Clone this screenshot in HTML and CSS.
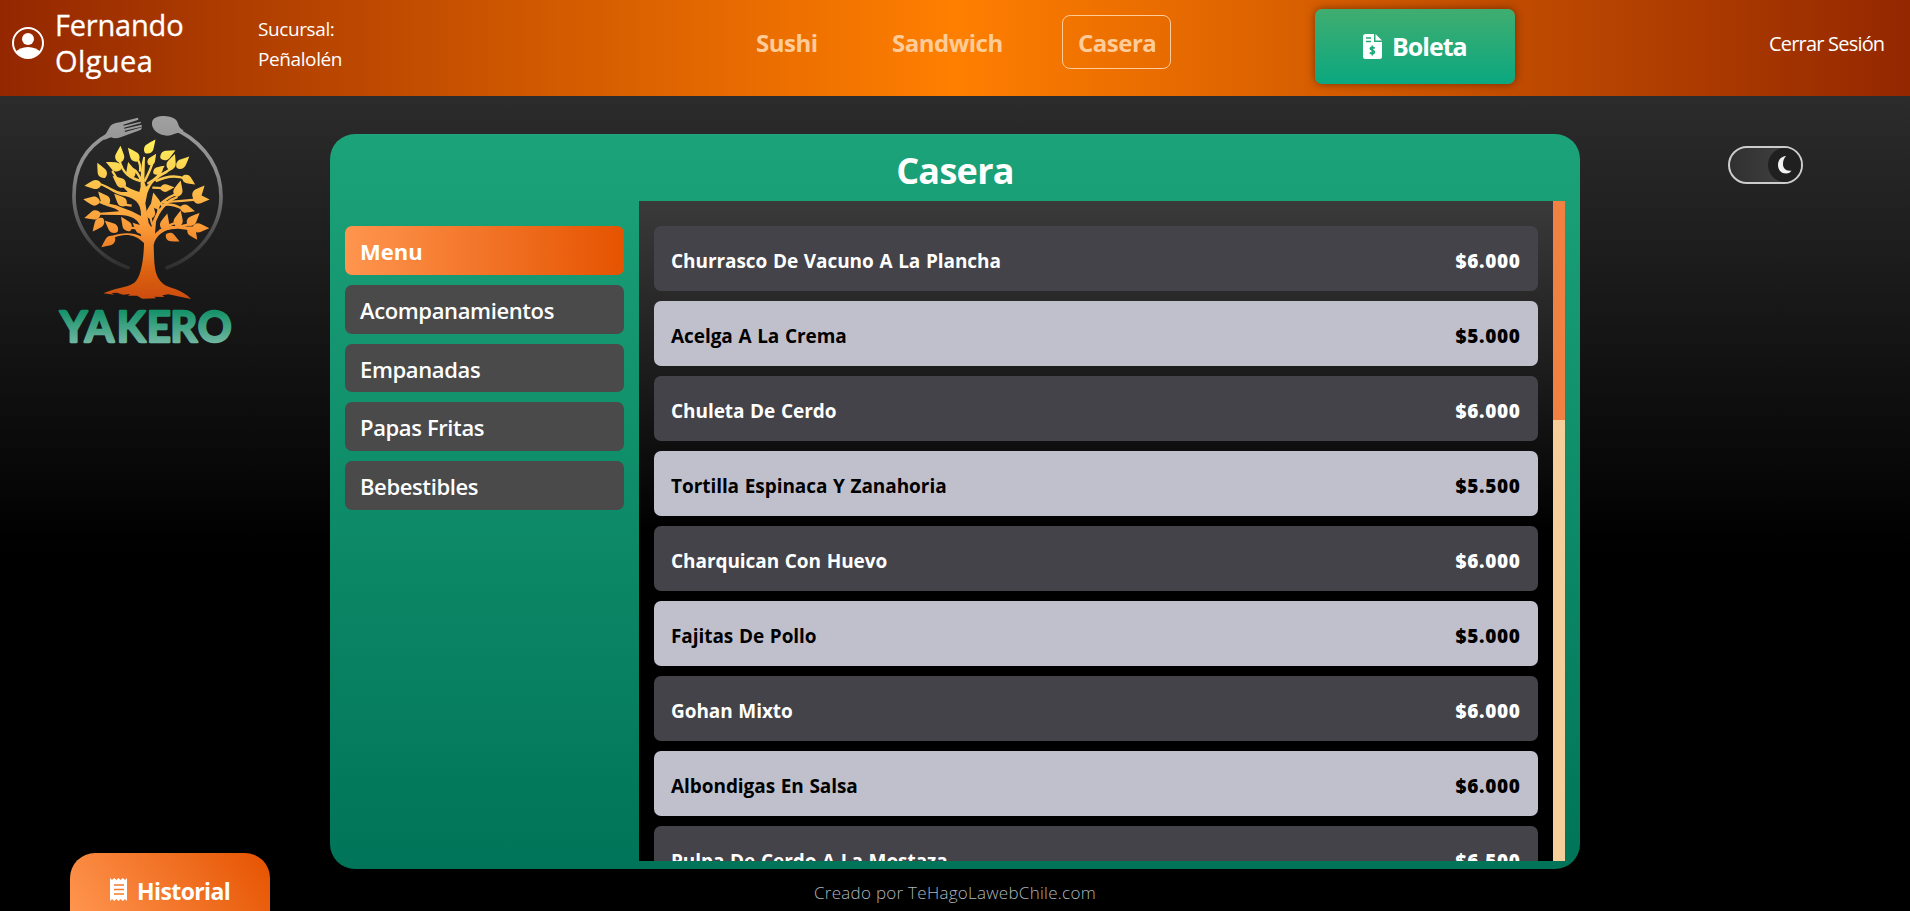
FILE: index.html
```html
<!DOCTYPE html>
<html lang="es">
<head>
<meta charset="utf-8">
<title>Yakero</title>
<link rel="stylesheet" href="styles.css">
</head>
<body>
<header class="topbar">
  <div class="user">
    <svg class="user-icon" viewBox="0 0 32 32"><defs><clipPath id="face"><circle cx="16" cy="16" r="15"/></clipPath></defs><circle cx="16" cy="16" r="15" fill="none" stroke="#fff" stroke-width="2"/><circle cx="16" cy="12" r="6" fill="#fff"/><path clip-path="url(#face)" fill="#fff" d="M2 26Q8 20 16 20T30 26V32H2Z"/></svg>
    <div class="user-name">Fernando<br><span class="surname">Olguea</span></div>
  </div>
  <div class="branch">Sucursal:<br>Peñalolén</div>
  <nav class="nav"><a class="n1">Sushi</a><a class="n2">Sandwich</a><a class="n3">Casera</a></nav>
  <button class="boleta">
    <svg viewBox="0 0 19 25" width="19" height="25"><path fill="#fff" d="M2.500 0H11V8H19V22.500Q19 25 16.500 25H2.500Q0 25 0 22.500V2.500Q0 0 2.500 0ZM12.500 0L19 6.500H12.500Z"/><path d="M3 4H8M3 7.500H8" stroke="#27a975" stroke-width="1.500"/><path d="M11.700 14.300Q9 12.600 7.500 13.900C6 16 12 16 11.400 18.500Q10 20.600 6.700 18.800M9.300 11.500V21.500" fill="none" stroke="#1ea87a" stroke-width="1.600"/></svg>
    <span>Boleta</span>
  </button>
  <a class="logout">Cerrar Sesión</a>
</header>
<div class="page">
  <aside class="left">
    <svg class="logo" viewBox="0 0 660 780" width="220" height="260">
      <defs>
        <linearGradient id="ring" gradientUnits="userSpaceOnUse" x1="0" y1="50" x2="0" y2="510"><stop offset="0" stop-color="#a0a0a0"/><stop offset=".35" stop-color="#8b8b8b"/><stop offset=".75" stop-color="#505050"/><stop offset="1" stop-color="#2c2c2c"/></linearGradient>
        <linearGradient id="tree" gradientUnits="userSpaceOnUse" x1="0" y1="120" x2="0" y2="590"><stop offset="0" stop-color="#fff35c"/><stop offset=".3" stop-color="#fcc04b"/><stop offset=".55" stop-color="#fb9a38"/><stop offset=".85" stop-color="#db600f"/><stop offset="1" stop-color="#ce4e10"/></linearGradient>
        <linearGradient id="word" gradientUnits="userSpaceOnUse" x1="0" y1="635" x2="0" y2="735"><stop offset="0" stop-color="#17936b"/><stop offset="1" stop-color="#75b8a4"/></linearGradient>
        <path id="leaf" d="M0 2C-10-1-17-12-12-23Q-6-37 0-49Q6-37 12-23C17-12 10-1 0 2Z"/>
        <mask id="leaves" maskUnits="userSpaceOnUse" x="0" y="0" width="660" height="780">
          <g fill="#fff">
            <use href="#leaf" transform="translate(317 158) rotate(37)"/><use href="#leaf" transform="translate(294 182) rotate(-38)"/><use href="#leaf" transform="translate(238 186) rotate(4)"/><use href="#leaf" transform="translate(363 174) rotate(62)"/><use href="#leaf" transform="translate(327 194) rotate(33) scale(.8)"/><use href="#leaf" transform="translate(388 208) rotate(20)"/><use href="#leaf" transform="translate(412 203) rotate(47)"/><use href="#leaf" transform="translate(342 220) rotate(55) scale(.8)"/><use href="#leaf" transform="translate(277 233) rotate(-15)"/><use href="#leaf" transform="translate(242 207) rotate(-65)"/><use href="#leaf" transform="translate(194 232) rotate(-27)"/><use href="#leaf" transform="translate(255 259) rotate(-50)"/><use href="#leaf" transform="translate(182 252) rotate(-96)"/><use href="#leaf" transform="translate(429 229) rotate(124) scale(.9)"/><use href="#leaf" transform="translate(362 265) rotate(86) scale(.85)"/><use href="#leaf" transform="translate(410 289) rotate(14)"/><use href="#leaf" transform="translate(461 293) rotate(42)"/><use href="#leaf" transform="translate(460 297) rotate(92)"/><use href="#leaf" transform="translate(422 322) rotate(105) scale(.9)"/><use href="#leaf" transform="translate(351 325) rotate(-13)"/><use href="#leaf" transform="translate(330 355) rotate(7)"/><use href="#leaf" transform="translate(257 316) rotate(-45)"/><use href="#leaf" transform="translate(206 312) rotate(-40)"/><use href="#leaf" transform="translate(178 306) rotate(-80)"/><use href="#leaf" transform="translate(180 340) rotate(-107)"/><use href="#leaf" transform="translate(188 356) rotate(-142)"/><use href="#leaf" transform="translate(231 395) rotate(-48)"/><use href="#leaf" transform="translate(270 391) rotate(-33)"/><use href="#leaf" transform="translate(223 412) rotate(-127)"/><use href="#leaf" transform="translate(310 398) rotate(-47) scale(.9)"/><use href="#leaf" transform="translate(370 388) rotate(14)"/><use href="#leaf" transform="translate(411 379) rotate(13)"/><use href="#leaf" transform="translate(444 374) rotate(45)"/><use href="#leaf" transform="translate(459 383) rotate(92)"/><use href="#leaf" transform="translate(447 383) rotate(146) scale(.9)"/><use href="#leaf" transform="translate(379 405) rotate(116) scale(.9)"/>
          </g>
        </mask>
      </defs>
      <g fill="none" stroke="url(#ring)" stroke-width="11" stroke-linecap="round"><path d="M205 104C130 145 101 215 102 292C103 385 168 470 264 503"/><path d="M420 94C500 138 544 210 543 292C542 385 475 470 381 503"/></g>
      <path fill="url(#ring)" d="M189 116L211 78Q220 69 240 67L294 53L295 59L250 74L251 77L302 65L303 69L252 83L253 86L305 74L305 80L254 92L255 96L306 82L303 89L242 112Q225 118 213 112L194 119ZM338 61C348 44 388 45 405 57C417 66 412 82 430 91L425 102C410 93 402 107 382 107C350 106 329 82 338 61Z"/>
      <path fill="url(#tree)" d="M302 260C302 200 307 183 310 170L315 171L313 245L318 260C350 235 350 224 380 212L383 218C342 235 333 252 322 280L316 310L326 369L334 382C340 350 355 322 390 297L411 288L414 294C376 309 359 338 348 365L345 401C360 384 380 376 411 378L410 385C375 385 345 409 341 435C343 493 341 528 370 552C385 564 428 568 453 597L385 583L367 586L373 591L342 590L349 595L307 596L291 587H264L270 582L249 584L231 578L214 579L223 584L190 580C222 564 260 564 283 548C306 531 312 460 312 429C285 400 250 399 215 415L211 409C252 394 285 398 307 411C304 365 288 348 240 345L179 344L180 338L238 334C220 320 202 321 178 309L181 303C208 315 224 311 243 322L275 334L303 348C304 310 286 292 243 286C218 279 205 263 178 255L180 249C210 258 217 270 245 276L263 276C252 262 235 250 214 215L219 210C240 245 249 261 298 276Z"/>
      <path fill="none" stroke="url(#tree)" stroke-width="7" d="M303 245C300 225 285 208 276 207M300 215Q303 195 294 180M239 183Q245 207 260 222Q280 238 301 243M313 245Q330 213 337 190M322 251Q359 231 366 207M328 250Q360 225 396 205M337 263Q365 265 372 264M347 244Q396 219 438 237M352 319Q393 283 412 283M370 307Q430 302 472 299M363 317Q390 307 427 326M342 382Q328 356 334 346M348 355Q361 328 351 315M359 392Q405 378 472 384M385 385Q432 377 459 370M375 381Q408 370 416 361M410 382Q449 386 454 391M275 317Q247 315 251 306M290 386Q275 380 267 388M307 411Q304 392 303 385"/>
      <rect width="660" height="780" fill="url(#tree)" mask="url(#leaves)"/>
      <text class="logo-word" x="60 134 230 320 391 473" y="726">YAKERO</text>
    </svg>
    <button class="historial"><svg viewBox="0 0 17 23" width="17" height="23"><path fill="#fff" d="M0 0L2 2 4.250 0 6.400 2 8.500 0 10.600 2 12.750 0 15 2 17 0V23L15 21 12.750 23 10.600 21 8.500 23 6.400 21 4.250 23 2 21 0 23Z"/><path d="M4 7H14M4 11.500H14M4 16H14" stroke="#f37a2c" stroke-width="1.300"/></svg><span>Historial</span></button>
  </aside>
  <main class="center">
    <section class="panel">
      <h1>Casera</h1>
      <div class="cols">
        <div class="cats">
          <div class="cat active"><span>Menu</span></div><div class="cat"><span>Acompanamientos</span></div><div class="cat"><span>Empanadas</span></div><div class="cat"><span>Papas Fritas</span></div><div class="cat"><span>Bebestibles</span></div>
        </div>
        <div class="scroll">
          <div class="items">
            <div class="item"><span>Churrasco De Vacuno A La Plancha</span><b>$6.000</b></div>
            <div class="item light"><span>Acelga A La Crema</span><b>$5.000</b></div>
            <div class="item"><span>Chuleta De Cerdo</span><b>$6.000</b></div>
            <div class="item light"><span>Tortilla Espinaca Y Zanahoria</span><b>$5.500</b></div>
            <div class="item"><span>Charquican Con Huevo</span><b>$6.000</b></div>
            <div class="item light"><span>Fajitas De Pollo</span><b>$5.000</b></div>
            <div class="item"><span>Gohan Mixto</span><b>$6.000</b></div>
            <div class="item light"><span>Albondigas En Salsa</span><b>$6.000</b></div>
            <div class="item"><span>Pulpa De Cerdo A La Mostaza</span><b>$6.500</b></div>
          </div>
          <div class="track"><div class="thumb"></div></div>
        </div>
      </div>
    </section>
    <footer>Creado por TeHagoLawebChile.com</footer>
  </main>
  <aside class="right">
    <div class="toggle"><div class="knob"><svg viewBox="0 0 17 18" width="17" height="18"><path fill="#f2f2f2" d="M9 0C4 .5 1 4 1 9C1 14 4.500 17.500 9 17.500Q13 17.500 14.500 14.500C9 15.500 6 12.500 6 8Q6 3 9 0Z"/></svg></div></div>
  </aside>
</div>
</body>
</html>
```
FILE: styles.css
```css
* { box-sizing: border-box; }
body { margin: 0; height: 911px; overflow: hidden; display: flex; flex-direction: column; color: #fff; font-family: "Open Sans", "Noto Sans", sans-serif; background: linear-gradient(#353535 0, #000 550px); }
button { border: 0; color: #fff; font-family: inherit; }
.topbar { height: 96px; flex: none; display: flex; align-items: flex-start; background: linear-gradient(90deg, #942700, #ff7f00 50%, #942700); }
.user { display: flex; width: 258px; padding-left: 12px; }
.user-icon { width: 32px; height: 32px; margin-top: 27px; }
.user-name { margin: 7px 0 0 11px; font-size: 29px; line-height: 36px; letter-spacing: -.2px; -webkit-text-stroke: .3px #fff; }
.surname { letter-spacing: .4px; }
.branch { width: 430px; padding-top: 14px; font-size: 19px; line-height: 30px; letter-spacing: -.4px; }
.nav { width: 627px; display: flex; padding-top: 15px; font-size: 24px; font-weight: 700; letter-spacing: -.5px; color: #ffcc99; }
.nav a { height: 54px; line-height: 54px; border: 1px solid transparent; white-space: nowrap; }
.n1 { margin-left: 67px; width: 136px; }
.n2 { width: 171px; }
.nav .n3 { width: 109px; padding-left: 15px; border-color: #ffcc99; border-radius: 8px; }
.boleta { width: 200px; height: 75px; margin-top: 9px; padding: 0; border-radius: 7px; display: flex; align-items: flex-start; background: linear-gradient(#40ad70, #0ba880); box-shadow: 0 0 8px rgba(60, 20, 0, .6); font-size: 25px; font-weight: 700; letter-spacing: -1px; }
.boleta svg { margin: 25px 10px 0 48px; }
.boleta span { line-height: 34px; margin-top: 20px; }
.logout { margin-left: 254px; line-height: 28px; padding-top: 30px; font-size: 20px; letter-spacing: -.8px; white-space: nowrap; }
.page { flex: 1; display: flex; }
.left { width: 330px; padding: 4px 0 0 40px; display: flex; flex-direction: column; justify-content: space-between; align-items: flex-start; }
.logo-word { fill: url(#word); stroke: url(#word); stroke-width: 7; stroke-linejoin: round; font: 700 126px Lato, sans-serif; }
.historial { width: 200px; height: 58px; margin-left: 30px; padding: 0; border-radius: 25px 25px 0 0; display: flex; background: linear-gradient(55deg, #ff954f, #e55300); font-size: 23px; font-weight: 700; letter-spacing: -.6px; }
.historial svg { margin: 25px 10px 0 40px; }
.historial span { line-height: 34px; margin-top: 21px; }
.center { width: 1250px; padding-top: 38px; }
.panel { height: 735px; border-radius: 25px; background: linear-gradient(#1ca379, #007458); padding: 0 15px 8px; display: flex; flex-direction: column; }
.panel h1 { margin: 0; height: 67px; line-height: 73px; text-align: center; font-size: 36px; letter-spacing: -.7px; }
.cols { height: 660px; display: flex; }
.cats { width: 294px; padding: 25px 15px 0 0; display: flex; flex-direction: column; gap: 10px; }
.cat { height: 48.800px; line-height: 50px; padding-left: 15px; border-radius: 7px; background: #4a4a4a; font-size: 22px; font-weight: 600; letter-spacing: -.38px; }
.cat.active { background: linear-gradient(90deg, #ff954f, #e55300); font-weight: 700; letter-spacing: 0; }
.scroll { flex: 1; display: flex; overflow: hidden; background: linear-gradient(#3a3a3a, #000 50%); }
.items { flex: 1; padding: 25px 15px 0; display: flex; flex-direction: column; gap: 10px; }
.item { height: 65px; flex: none; line-height: 70px; padding: 0 18px 0 17px; border-radius: 7px; display: flex; justify-content: space-between; background: #444349; font-size: 19px; font-weight: 700; letter-spacing: -.06px; word-spacing: .8px; }
.item b { letter-spacing: .7px; margin-right: -.7px; }
.item.light { background: #c0c0cd; color: #000; }
.track { width: 12px; background: #f5ce99; }
.thumb { height: 219px; background: #f18143; }
footer { text-align: center; margin-top: 10px; line-height: 28px; font-size: 17px; font-weight: 300; letter-spacing: .27px; color: #adb5bd; }
.right { padding: 50px 0 0 148px; }
.toggle { width: 75px; height: 38px; border: 2px solid #ccc; border-radius: 19px; display: flex; justify-content: flex-end; background: linear-gradient(90deg, #303030, #444); }
.knob { width: 33px; height: 34px; border-radius: 50%; background: #202020; padding: 8px 0 0 9px; }
```
